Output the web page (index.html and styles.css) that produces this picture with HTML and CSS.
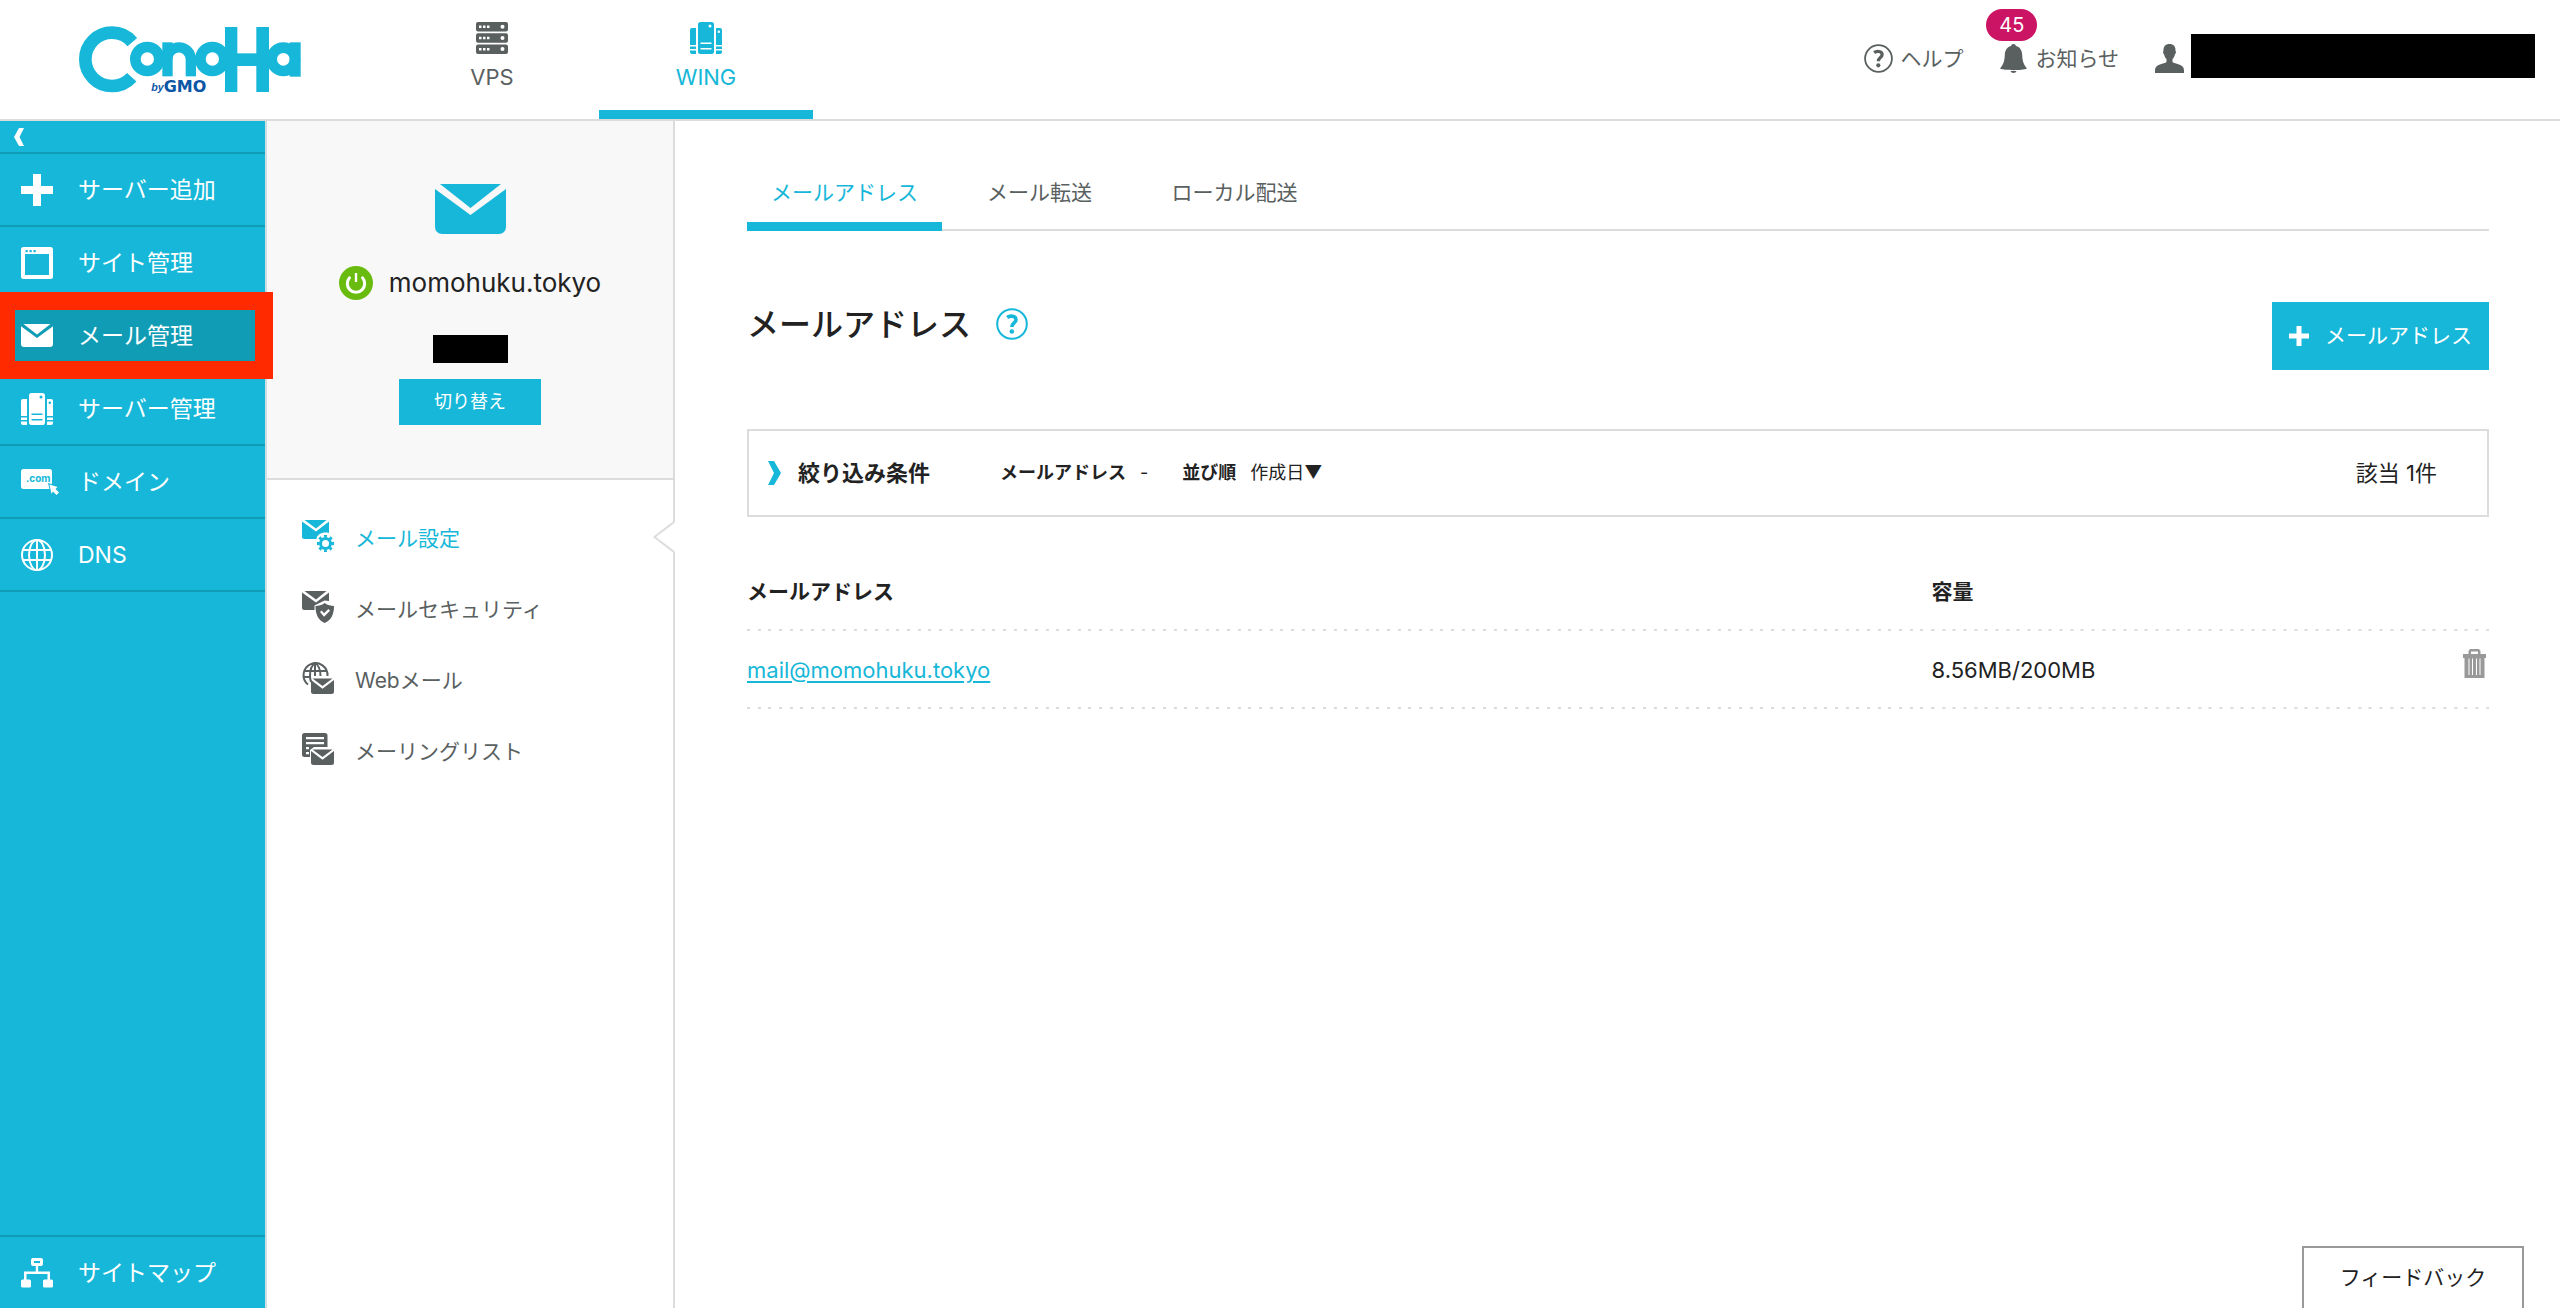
FILE: index.html
```html
<!DOCTYPE html>
<html lang="ja">
<head>
<meta charset="utf-8">
<title>メールアドレス | ConoHa WING</title>
<link rel="stylesheet" href="styles.css">
</head>
<body>
<svg class="defs" aria-hidden="true">
  <defs>
    <symbol id="i-tower" viewBox="0 0 32 32">
      <path fill="currentColor" fill-rule="evenodd" d="M10.500 0h11a2.500 2.500 0 0 1 2.500 2.500v27a2.500 2.500 0 0 1-2.500 2.500h-11a2.500 2.500 0 0 1-2.500-2.500v-27a2.500 2.500 0 0 1 2.500-2.500zM20 2.500a1.500 1.500 0 1 0 0 3a1.500 1.500 0 0 0 0-3zM10.500 20.500v1.500h11v-1.500zM10.500 26v1.500h11v-1.500z"/>
      <path fill="currentColor" d="M2 6h4v17H0V8a2 2 0 0 1 2-2zM0 24.500h6v2.500H0zM0 28.500h6v3.500H2a2 2 0 0 1-2-2z"/>
      <path fill="currentColor" fill-rule="evenodd" d="M26 6h4a2 2 0 0 1 2 2v15h-6zM28.800 8.500a1 1 0 1 0 0 2.500a1 1 0 0 0 0-2.500zM26 24.500h6v2.500h-6zM26 28.500h6v1.500a2 2 0 0 1-2 2h-4z"/>
    </symbol>
    <symbol id="i-mail" viewBox="0 0 32 23">
      <path fill="currentColor" d="M2.500 0h27L16 10.500zM0 2.200L16 14L32 2.200V20a3 3 0 0 1-3 3H3a3 3 0 0 1-3-3z"/>
    </symbol>
    <symbol id="i-help" viewBox="0 0 32 32">
      <circle cx="16" cy="16" r="14.800" fill="none" stroke="currentColor" stroke-width="2"/>
      <path fill="none" stroke="currentColor" stroke-width="3.600" d="M11.200 9.500c2.500-2 8.800-2 8.800 2.200c0 3.300-4.200 3-4.200 7.300"/>
      <circle cx="15.800" cy="23.500" r="2.300" fill="currentColor"/>
    </symbol>
    <symbol id="i-plus" viewBox="0 0 32 32">
      <path fill="currentColor" d="M12 0h8v12h12v8H20v12h-8V20H0v-8h12z"/>
    </symbol>
    <symbol id="i-globe" viewBox="0 0 32 32">
      <g fill="none" stroke="currentColor" stroke-width="2">
        <circle cx="16" cy="16" r="15"/><ellipse cx="16" cy="16" rx="8" ry="15"/>
        <path d="M16 1v30M1.500 11h29M1.500 21h29"/>
      </g>
    </symbol>
  </defs>
</svg>

<header class="header">
  <a class="logo" href="#" aria-label="ConoHa by GMO">
    <svg viewBox="0 0 720 270" aria-hidden="true">
      <g fill="none" stroke="#16b7d8">
        <circle cx="126" cy="133" r="80" stroke-width="38" pathLength="360" stroke-dasharray="276 84" stroke-dashoffset="-42"/>
        <circle cx="232" cy="132" r="59" stroke="#fff" stroke-width="4"/>
        <circle cx="232" cy="132" r="36" stroke-width="32"/>
        <circle cx="327" cy="132" r="35" stroke-width="31" pathLength="360" stroke-dasharray="180 180" stroke-dashoffset="-180"/>
        <circle cx="427" cy="132" r="36" stroke-width="32"/>
        <circle cx="640" cy="133" r="35" stroke-width="32"/>
      </g>
      <g fill="#16b7d8">
        <rect x="277" y="82" width="31" height="102"/>
        <rect x="347" y="131" width="31" height="53"/>
        <rect x="465" y="36" width="37" height="195"/>
        <rect x="559" y="36" width="38" height="195"/>
        <rect x="500" y="115" width="62" height="38"/>
        <rect x="659" y="82" width="33" height="103"/>
      </g>
      <text class="logo-by" x="244" y="228">by</text>
      <text class="logo-gmo" x="281" y="232">GMO</text>
    </svg>
  </a>
  <nav class="services" aria-label="サービス">
    <a class="service" href="#">
      <svg class="icon32" viewBox="0 0 32 32" aria-hidden="true">
        <path fill="currentColor" fill-rule="evenodd" d="M2 0h28a2 2 0 0 1 2 2v5.500a2 2 0 0 1-2 2H2a2 2 0 0 1-2-2V2a2 2 0 0 1 2-2zM3 3.500v2.500h2.500V3.500zM7 3.500v2.500h2.500V3.500zM11 3.500v2.500h2.500V3.500zM26.500 2.700a2 2 0 1 0 0 4a2 2 0 0 0 0-4z"/>
        <path fill="currentColor" fill-rule="evenodd" transform="translate(0 11.200)" d="M2 0h28a2 2 0 0 1 2 2v5.500a2 2 0 0 1-2 2H2a2 2 0 0 1-2-2V2a2 2 0 0 1 2-2zM3 3.500v2.500h2.500V3.500zM7 3.500v2.500h2.500V3.500zM11 3.500v2.500h2.500V3.500zM26.500 2.700a2 2 0 1 0 0 4a2 2 0 0 0 0-4z"/>
        <path fill="currentColor" fill-rule="evenodd" transform="translate(0 22.400)" d="M2 0h28a2 2 0 0 1 2 2v5.500a2 2 0 0 1-2 2H2a2 2 0 0 1-2-2V2a2 2 0 0 1 2-2zM3 3.500v2.500h2.500V3.500zM7 3.500v2.500h2.500V3.500zM11 3.500v2.500h2.500V3.500zM26.500 2.700a2 2 0 1 0 0 4a2 2 0 0 0 0-4z"/>
      </svg>
      <span>VPS</span>
    </a>
    <a class="service is-active" href="#">
      <svg class="icon32" aria-hidden="true"><use href="#i-tower"/></svg>
      <span>WING</span>
    </a>
  </nav>
  <div class="tools">
    <a class="tool" href="#"><svg class="icon29" aria-hidden="true"><use href="#i-help"/></svg>ヘルプ</a>
    <a class="tool" href="#">
      <span class="bell">
        <svg class="icon29" viewBox="0 0 29 29" aria-hidden="true">
          <path fill="currentColor" d="M14.500 0c1.400 0 2.300.8 2.400 2C21.500 3 23 7 23.200 11c.3 6.500 1.300 9 4.800 13.500c-5 2.200-22 2.200-27 0C4.500 20 5.500 17.500 5.800 11C6 7 7.500 3 12.100 2c.1-1.200 1-2 2.400-2zM11.500 27h6c-.6 2.600-5.400 2.600-6 0z"/>
        </svg>
        <span class="badge">45</span>
      </span>お知らせ</a>
    <a class="tool" href="#" aria-label="アカウント">
      <svg class="icon29" viewBox="0 0 29 29" aria-hidden="true">
        <path fill="currentColor" d="M14.500 0c4 0 6.300 2.500 6 7c.8.500.5 2.500-.5 3.200c-.5 2.300-1.500 3.800-2.500 4.800v3c2 2 11.500 2 11.500 8v3H0v-3c0-6 9.500-6 11.500-8v-3c-1-1-2-2.500-2.500-4.800c-1-.7-1.300-2.700-.5-3.200c-.3-4.500 2-7 6-7z"/>
      </svg>
      <span class="account-mask"></span>
    </a>
  </div>
</header>

<div class="layout">
  <nav class="sidebar" aria-label="メインメニュー">
    <button class="collapse" type="button" aria-label="メニューを閉じる">
      <svg class="collapse-icon" viewBox="0 0 10 18" aria-hidden="true"><path fill="currentColor" d="M5 0h5L5.500 9L10 18H5L0 9z"/></svg>
    </button>
    <a class="side-item" href="#"><svg class="icon32" aria-hidden="true"><use href="#i-plus"/></svg>サーバー追加</a>
    <a class="side-item" href="#">
      <svg class="icon32" viewBox="0 0 32 32" aria-hidden="true"><path fill="currentColor" fill-rule="evenodd" d="M2.500 0h27A2.500 2.500 0 0 1 32 2.500v27a2.500 2.500 0 0 1-2.500 2.500h-27A2.500 2.500 0 0 1 0 29.500v-27A2.500 2.500 0 0 1 2.500 0zM4 7v21h24V7zM4.500 3v2.200h2.200V3zM8.500 3v2.200h2.200V3zM12.500 3v2.200h2.200V3z"/></svg>サイト管理</a>
    <a class="side-item is-active" href="#"><svg class="icon-mail" aria-hidden="true"><use href="#i-mail"/></svg>メール管理<span class="marker"></span></a>
    <a class="side-item" href="#"><svg class="icon32" aria-hidden="true"><use href="#i-tower"/></svg>サーバー管理</a>
    <a class="side-item" href="#">
      <svg class="icon-domain" viewBox="0 0 38 26" aria-hidden="true">
        <path fill="currentColor" d="M2.500 0h26A2.500 2.500 0 0 1 31 2.500V15l-4-1l1.500 6h-26A2.500 2.500 0 0 1 0 17.500v-15A2.500 2.500 0 0 1 2.500 0zM28.500 15.500l8 2.500l-2 2l3.500 3.500l-2.500 2.500l-3.500-3.500l-1.500 2.200z"/>
        <text class="domain-text" x="5" y="13">.com</text>
      </svg>ドメイン</a>
    <a class="side-item" href="#"><svg class="icon32" aria-hidden="true"><use href="#i-globe"/></svg>DNS</a>
    <a class="side-item side-bottom" href="#">
      <svg class="icon32" viewBox="0 0 32 32" aria-hidden="true">
        <path fill="currentColor" fill-rule="evenodd" d="M12 1h8a2 2 0 0 1 2 2v4a2 2 0 0 1-2 2h-2.800v5.500h11.800v8h1.500a1.500 1.500 0 0 1 1.500 1.500v5a1.500 1.500 0 0 1-1.500 1.500h-7A1.500 1.500 0 0 1 22 29v-5a1.500 1.500 0 0 1 1.500-1.500h3v-5.500h-21v5.500h3A1.500 1.500 0 0 1 10 24v5a1.500 1.500 0 0 1-1.500 1.500h-7A1.500 1.500 0 0 1 0 29v-5a1.500 1.500 0 0 1 1.500-1.500H3v-8h11.800V9H12a2 2 0 0 1-2-2V3a2 2 0 0 1 2-2zM13 4v2h6V4z"/>
      </svg>サイトマップ</a>
  </nav>

  <aside class="sub">
    <section class="profile">
      <svg class="profile-mail" aria-hidden="true" viewBox="0 0 71 50"><path fill="currentColor" d="M5 0h61L35.500 24zM0 5l35.500 26L71 5v38a7 7 0 0 1-7 7H7a7 7 0 0 1-7-7z"/></svg>
      <div class="domain">
        <svg class="power" viewBox="0 0 34 34" aria-hidden="true">
          <circle cx="17" cy="17" r="17" fill="#6abb10"/>
          <path fill="none" stroke="#fff" stroke-width="3" stroke-linecap="round" d="M10.500 11.800a8.700 8.700 0 1 0 13 0"/>
          <path fill="none" stroke="#fff" stroke-width="2.400" d="M17 7v9"/>
        </svg>
        <span>momohuku.tokyo</span>
      </div>
      <span class="plan-mask"></span>
      <button class="switch" type="button">切り替え</button>
    </section>
    <nav class="submenu" aria-label="メールメニュー">
      <a class="sub-item is-active" href="#">
        <svg class="icon32" viewBox="0 0 32 32" aria-hidden="true">
          <path fill="currentColor" d="M2.500 0h22L14 8.500zM0 1.500L14 11.500L27 1.500V13c-6-1.500-12 1-12.500 6H2.500A2.500 2.500 0 0 1 0 16.500z"/>
          <circle cx="23.500" cy="23.500" r="5" fill="none" stroke="currentColor" stroke-width="3"/>
          <circle cx="23.500" cy="23.500" r="7.300" fill="none" stroke="currentColor" stroke-width="2.600" pathLength="80" stroke-dasharray="5 5" stroke-dashoffset="2.500"/>
        </svg><span>メール設定</span>
        <svg class="notch" viewBox="0 0 22 32" aria-hidden="true"><path fill="#fff" d="M22 1L1 16L22 31z"/><path fill="none" stroke="#dcdcdc" stroke-width="2" d="M21 1L1.500 16L21 31"/></svg>
      </a>
      <a class="sub-item" href="#">
        <svg class="icon32" viewBox="0 0 32 32" aria-hidden="true">
          <path fill="currentColor" d="M2.500 0h22L14 8.500zM0 1.500L14 11.500L27 1.500V10l-4.500-.5L12.500 14.500v4.500h-10A2.500 2.500 0 0 1 0 16.500z"/>
          <path fill="currentColor" fill-rule="evenodd" d="M22.700 12c3 2.300 6 3 9.300 3c0 8-2.500 14-9.300 17C16 29 13.500 23 13.500 15c3.200 0 6.200-.7 9.200-3zM18 21l4 4.800l6-6l-1.600-1.800l-4.300 4.200l-2.400-2.800z"/>
        </svg><span>メールセキュリティ</span>
      </a>
      <a class="sub-item" href="#">
        <svg class="icon32" viewBox="0 0 32 32" aria-hidden="true">
          <g fill="none" stroke="currentColor" stroke-width="2"><path d="M6 22.500A12 12 0 1 1 25.500 14M8 14c0-6 2-11 5-13c3.500 2 5.500 7 5.500 13M13 1v13M1.500 9h23M1 15h8M8 14c0 3 .5 4 1 6"/></g>
          <path fill="currentColor" d="M10.500 16.500h20L20.500 24zM9 18l11.500 8.800L32 18v11.500a2.500 2.500 0 0 1-2.500 2.500h-18A2.500 2.500 0 0 1 9 29.500z"/>
        </svg><span>Webメール</span>
      </a>
      <a class="sub-item" href="#">
        <svg class="icon32" viewBox="0 0 32 32" aria-hidden="true">
          <path fill="currentColor" fill-rule="evenodd" d="M2.500 0h20.500A2.500 2.500 0 0 1 25.500 2.500V14H12l-4 3v7H2.500A2.500 2.500 0 0 1 0 21.500v-19A2.500 2.500 0 0 1 2.500 0zM4 4v2.200h18V4zM4 9v2.200h18V9zM4 14v2.200h3V14zM4 19v2.200h3V19z"/>
          <path fill="currentColor" d="M10.500 16.500h20L20.500 24zM9 18l11.500 8.800L32 18v11.500a2.500 2.500 0 0 1-2.500 2.500h-18A2.500 2.500 0 0 1 9 29.500z"/>
        </svg><span>メーリングリスト</span>
      </a>
    </nav>
  </aside>

  <main class="main">
    <nav class="tabs" aria-label="メール設定">
      <a class="tab is-active" href="#">メールアドレス</a>
      <a class="tab" href="#">メール転送</a>
      <a class="tab" href="#">ローカル配送</a>
    </nav>
    <div class="page-head">
      <h1>メールアドレス</h1>
      <a class="head-help" href="#" aria-label="ヘルプ"><svg class="icon32" aria-hidden="true"><use href="#i-help"/></svg></a>
      <button class="add" type="button"><svg class="icon20" aria-hidden="true"><use href="#i-plus"/></svg>メールアドレス</button>
    </div>
    <section class="filter">
      <button class="filter-toggle" type="button">
        <svg class="chevron" viewBox="0 0 13 24" aria-hidden="true"><path fill="#16b7d8" d="M0 0h6l7 12l-7 12H0l6-12z"/></svg>絞り込み条件</button>
      <dl class="conditions">
        <div><dt>メールアドレス</dt><dd>-</dd></div>
        <div><dt>並び順</dt><dd>作成日▼</dd></div>
      </dl>
      <p class="count">該当 1件</p>
    </section>
    <table class="list">
      <thead>
        <tr><th class="col-address" scope="col">メールアドレス</th><th scope="col">容量</th><td></td></tr>
      </thead>
      <tbody>
        <tr>
          <td><a class="address" href="#">mail@momohuku.tokyo</a></td>
          <td>8.56MB/200MB</td>
          <td class="col-action">
            <button class="trash" type="button" aria-label="削除">
              <svg viewBox="0 0 23 29" aria-hidden="true">
                <path fill="currentColor" fill-rule="evenodd" d="M7 0h9l1.500 2v3H23v4h-1.500v20h-20V9H0V5h5.500V2zM8 2.500V5h7V2.500zM5.500 9.500V26h1V9.500zM9 9.500V26h1V9.500zM13 9.500V26h1V9.500zM16.500 9.500V26h1V9.500z"/>
              </svg>
            </button>
          </td>
        </tr>
      </tbody>
    </table>
  </main>
</div>
<button class="feedback" type="button">フィードバック</button>
</body>
</html>
```
FILE: styles.css
```css
:root {
  --cyan: #16b7d8;
  --cyan-dark: #109cb4;
  --line: #dcdcdc;
  --gray: #5a5f5f;
  --ink: #222;
}
* { box-sizing: border-box; }
body {
  margin: 0;
  min-height: 100vh;
  display: flex;
  flex-direction: column;
  background: #fff;
  color: var(--ink);
  font-family: Inter, "Noto Sans CJK JP", sans-serif;
  font-size: 21px;
  line-height: 32px;
}
a { color: inherit; text-decoration: none; }
button { font: inherit; border: 0; padding: 0; background: none; color: inherit; cursor: pointer; }
svg { display: block; flex: none; overflow: visible; }
.defs { position: absolute; width: 0; height: 0; }
.icon32 { width: 32px; height: 32px; }
.icon29 { width: 29px; height: 29px; }
.icon20 { width: 20px; height: 20px; }

/* header */
.header {
  display: flex;
  height: 121px;
  padding: 0 25px 0 70px;
  border-bottom: 2px solid var(--line);
  color: var(--gray);
}
.logo { padding-top: 15px; margin-right: 75px; }
.logo svg { width: 240px; height: 90px; }
.logo-by { font: italic bold 32px "Liberation Sans", sans-serif; fill: #0d55a5; }
.logo-gmo { font: bold 48px "DejaVu Sans", sans-serif; fill: #0d55a5; }
.services { display: flex; }
.service {
  width: 214px;
  padding-top: 22px;
  display: flex;
  flex-direction: column;
  align-items: center;
  gap: 7px;
  font-size: 22px;
  border-bottom: 9px solid transparent;
}
.service.is-active { color: var(--cyan); border-color: var(--cyan); }
.tools { margin-left: auto; padding-bottom: 2px; display: flex; align-items: center; gap: 36px; }
.tool { display: flex; align-items: center; gap: 7px; }
.bell { position: relative; }
.badge {
  position: absolute;
  left: -13px;
  bottom: 32px;
  width: 51px;
  border-radius: 16px;
  background: #cc1464;
  color: #fff;
  font-size: 20px;
  text-align: center;
}
.account-mask { width: 344px; height: 44px; margin-bottom: 6px; background: #000; }

/* columns */
.layout { flex: 1; display: flex; }
.sidebar {
  flex: none;
  width: 267px;
  display: flex;
  flex-direction: column;
  background: var(--cyan);
  border-right: 2px solid #cddfe3;
  color: #fff;
}
.collapse {
  height: 33px;
  padding-left: 14px;
  border-bottom: 2px solid var(--cyan-dark);
}
.collapse-icon { width: 10px; height: 18px; }
.side-item {
  position: relative;
  display: flex;
  align-items: center;
  height: 73px;
  padding-left: 21px;
  gap: 25px;
  border-bottom: 2px solid var(--cyan-dark);
  font-size: 23px;
}
.side-item.is-active { background: var(--cyan-dark); }
.icon-mail { width: 32px; height: 23px; }
.icon-domain { width: 38px; height: 26px; margin-right: -6px; }
.domain-text { font: bold 10px Inter, sans-serif; fill: var(--cyan); }
.side-bottom { margin-top: auto; border-bottom: 0; border-top: 2px solid var(--cyan-dark); }
.marker {
  position: absolute;
  z-index: 2;
  inset: -8px -8px -8px 0;
  border: 18px solid #ff2a00;
  border-left-width: 15px;
}

.sub { flex: none; width: 408px; border-right: 2px solid var(--line); }
.profile {
  display: flex;
  flex-direction: column;
  align-items: center;
  padding: 63px 0 53px;
  background: #f8f8f8;
  border-bottom: 2px solid var(--line);
}
.profile-mail { width: 71px; height: 50px; color: var(--cyan); }
.domain { display: flex; align-items: center; gap: 16px; margin-top: 32px; font-size: 26px; line-height: 34px; }
.power { width: 34px; height: 34px; }
.plan-mask { width: 75px; height: 28px; margin-top: 35px; background: #000; }
.switch { width: 142px; height: 46px; margin-top: 16px; background: var(--cyan); color: #fff; font-size: 18px; }
.submenu { padding-top: 20px; }
.sub-item {
  position: relative;
  display: flex;
  align-items: center;
  height: 71px;
  padding-left: 35px;
  gap: 21px;
  color: var(--gray);
}
.sub-item span { padding-top: 6px; }
.sub-item.is-active { color: var(--cyan); }
.notch { position: absolute; right: -2px; top: 21px; width: 22px; height: 32px; }

/* content */
.main { flex: 1; min-width: 0; padding: 43px 71px 0 72px; }
.tabs { display: flex; box-shadow: inset 0 -2px var(--line); }
.tab {
  width: 195px;
  height: 67px;
  border-bottom: 9px solid transparent;
  line-height: 58px;
  text-align: center;
  color: var(--gray);
}
.tab.is-active { color: var(--cyan); border-color: var(--cyan); }
.page-head { display: flex; align-items: flex-start; margin-top: 71px; }
h1 { margin: 0; font-size: 32px; line-height: 46px; font-weight: 500; }
.head-help { margin: 6px 0 0 25px; color: var(--cyan); }
.add {
  display: flex;
  align-items: center;
  justify-content: center;
  gap: 16px;
  width: 217px;
  height: 68px;
  margin-left: auto;
  background: var(--cyan);
  color: #fff;
}
.filter {
  display: flex;
  align-items: center;
  height: 88px;
  margin-top: 59px;
  padding: 0 50px 0 19px;
  border: 2px solid var(--line);
}
.filter-toggle { display: flex; align-items: center; gap: 17px; font-size: 22px; font-weight: 700; }
.chevron { width: 13px; height: 24px; }
.conditions { display: flex; gap: 34px; margin: 0 0 0 70px; font-size: 18px; }
.conditions div { display: flex; gap: 14px; }
.conditions dt { font-weight: 700; }
.conditions dd { margin: 0; }
.count { margin: 0 0 0 auto; font-size: 22px; }
.list { width: 100%; margin-top: 36px; border-collapse: collapse; font-size: 22px; }
.list tr {
  height: 78px;
  background: linear-gradient(90deg, var(--line) 3px, transparent 3px 11px, var(--line) 11px 14px, transparent 14px 21px, var(--line) 21px 24px, transparent 24px) left bottom / 32px 2px repeat-x;
}
.list th, .list td { padding: 0; text-align: left; }
.list th { font-size: 21px; }
.col-address { width: 68%; }
.address { color: var(--cyan); text-decoration: underline; text-underline-offset: 3px; }
.list .col-action { padding: 0 3px 14px 0; }
.trash { display: block; width: 23px; height: 29px; margin-left: auto; color: #999; }

.feedback {
  position: fixed;
  right: 36px;
  bottom: 0;
  width: 222px;
  height: 62px;
  background: #fff;
  border: 2px solid #999;
  border-bottom: 0;
}
```
